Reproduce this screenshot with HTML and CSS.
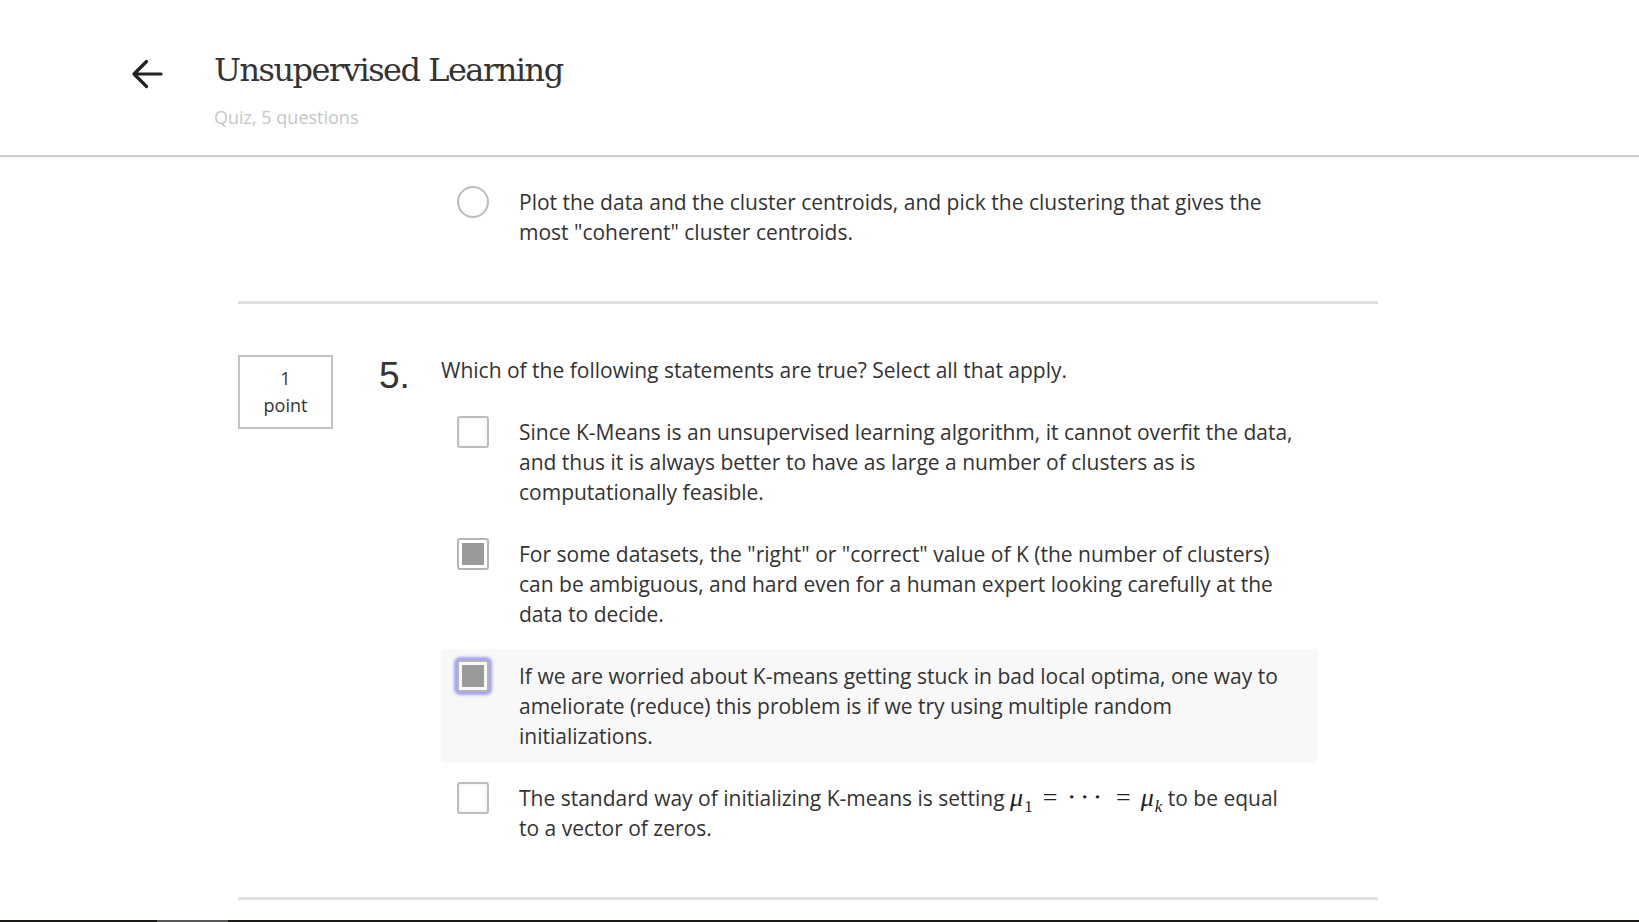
FILE: index.html
```html
<!DOCTYPE html>
<html lang="en">
<head>
<meta charset="utf-8">
<title>Unsupervised Learning</title>
<link rel="stylesheet" href="styles.css">
</head>
<body>
<header class="top">
  <a class="back" href="#" aria-label="Back">
    <svg width="32" height="30" viewBox="0 0 32 30" aria-hidden="true">
      <path d="M3 15 H30 M15.5 2.5 L3 15 L15.5 27.5" fill="none" stroke="#222" stroke-width="3.2" stroke-linecap="round" stroke-linejoin="round"/>
    </svg>
  </a>
  <div class="titles">
    <h1 class="title">Unsupervised Learning</h1>
    <div class="subtitle">Quiz, 5 questions</div>
  </div>
</header>

<main class="content">
  <section class="question question-tail">
    <div class="points-col"></div>
    <div class="num-col"></div>
    <div class="body-col">
      <ul class="options">
        <li class="option">
          <span class="radio"></span>
          <span class="option-text">Plot the data and the cluster centroids, and pick the clustering that gives the most "coherent" cluster centroids.</span>
        </li>
      </ul>
    </div>
  </section>

  <hr class="divider">

  <section class="question">
    <div class="points-col">
      <div class="points">1<br>point</div>
    </div>
    <div class="num-col"><div class="qnum">5.</div></div>
    <div class="body-col">
      <p class="prompt">Which of the following statements are true? Select all that apply.</p>
      <ul class="options">
        <li class="option">
          <span class="checkbox"></span>
          <span class="option-text">Since K-Means is an unsupervised learning algorithm, it cannot overfit the data, and thus it is always better to have as large a number of clusters as is computationally feasible.</span>
        </li>
        <li class="option">
          <span class="checkbox checked"></span>
          <span class="option-text">For some datasets, the "right" or "correct" value of K (the number of clusters) can be ambiguous, and hard even for a human expert looking carefully at the data to decide.</span>
        </li>
        <li class="option option-active">
          <span class="checkbox checked focused"></span>
          <span class="option-text">If we are worried about K-means getting stuck in bad local optima, one way to ameliorate (reduce) this problem is if we try using multiple random initializations.</span>
        </li>
        <li class="option">
          <span class="checkbox"></span>
          <span class="option-text">The standard way of initializing K-means is setting <span class="math"><i class="mi">μ</i><sub class="msub">1</sub><span class="mo">=</span><span class="cdots">⋅⋅⋅</span><span class="mo">=</span><i class="mi">μ</i><sub class="msub"><i>k</i></sub></span> to be equal to a vector of zeros.</span>
        </li>
      </ul>
    </div>
  </section>

  <hr class="divider divider-last">
</main>
<div class="strip"></div>
</body>
</html>
```

FILE: styles.css
```css
html, body {
  margin: 0;
  padding: 0;
  background: #fff;
}

body {
  font-family: "Open Sans", "Noto Sans", "Liberation Sans", sans-serif;
  color: #333;
  height: 922px;
  overflow: hidden;
}

/* header */
.top {
  box-sizing: border-box;
  height: 157px;
  display: flex;
  align-items: flex-start;
  padding: 50px 0 0 131px;
  border-bottom: 2px solid #cdcdcd;
  box-shadow: 0 1px 2px rgba(0, 0, 0, 0.06);
}

.back {
  display: block;
  width: 32px;
  height: 30px;
  margin-top: 9px;
  margin-right: 51px;
}

.back svg {
  display: block;
}

.titles {
  display: flex;
  flex-direction: column;
}

.title {
  margin: 0;
  font-family: "DejaVu Serif", "Liberation Serif", serif;
  font-weight: normal;
  font-size: 32px;
  letter-spacing: -1.5px;
  line-height: 40px;
  color: #333;
}

.subtitle {
  margin-top: 15px;
  font-size: 18px;
  line-height: 24px;
  color: #c6c6c6;
}

/* content */
.content {
  width: 1140px;
  margin-left: 238px;
  padding-top: 18px;
}

.question {
  display: grid;
  grid-template-columns: 95px 108px 877px;
  align-items: start;
  padding: 51px 0 42px;
}

.question-tail {
  padding-top: 0;
}

.points {
  box-sizing: border-box;
  width: 95px;
  height: 74px;
  border: 2px solid #c2c2c2;
  padding: 8px 0;
  text-align: center;
  font-size: 18px;
  line-height: 27px;
  color: #333;
}

.qnum {
  padding-left: 46px;
  margin-top: 2px;
  font-family: "Liberation Sans", Arial, sans-serif;
  font-size: 37px;
  line-height: 37px;
  color: #333;
}

.prompt {
  margin: 0 0 20px;
  font-size: 21px;
  line-height: 30px;
}

.options {
  list-style: none;
  margin: 0;
  padding: 0;
  display: flex;
  flex-direction: column;
  gap: 8px;
}

.option {
  display: flex;
  align-items: flex-start;
  gap: 30px;
  padding: 12px 22px 12px 16px;
  border-radius: 4px;
  font-size: 21px;
  line-height: 30px;
}

.option-active {
  background: #f8f8f8;
}

.option-text {
  flex: 1;
  color: #333;
}

.checkbox {
  flex: none;
  box-sizing: border-box;
  width: 32px;
  height: 32px;
  margin-top: -1px;
  border: 2px solid #bdbdbd;
  border-radius: 3px;
  background: #fff;
  box-shadow: inset 0 0 4px rgba(0, 0, 0, 0.08);
}

.checkbox.checked {
  border-color: #b5b5b5;
  padding: 3px;
  background: #9a9a9a;
  background-clip: content-box;
  box-shadow: none;
}

.checkbox.focused {
  box-shadow: 0 0 3px 3px #a09ff6;
}

.radio {
  flex: none;
  box-sizing: border-box;
  width: 32px;
  height: 32px;
  margin-top: -1px;
  border: 2px solid #bcbcbc;
  border-radius: 50%;
  background: radial-gradient(circle at 50% 45%, #fff 55%, #f0f0f0 100%);
}

/* math */
.math {
  font-family: "Liberation Serif", "DejaVu Serif", serif;
  font-size: 26px;
  line-height: 0;
  white-space: nowrap;
  color: #222;
}

.mi {
  font-style: italic;
}

.msub {
  font-size: 17px;
  vertical-align: -6px;
  line-height: 0;
  margin-left: 1px;
}

.mo {
  margin: 0 10px;
}

.cdots {
  letter-spacing: 4px;
}

/* dividers */
.divider {
  margin: 0;
  height: 3px;
  border: 0;
  background: #e0e0e0;
}

.divider-last {
  margin-bottom: 20px;
}

.strip {
  height: 2px;
  background: linear-gradient(to right, #1d1a18 0, #1d1a18 157px, #5a5856 157px, #5a5856 228px, #1d1a18 228px, #1d1a18 100%);
}
```
